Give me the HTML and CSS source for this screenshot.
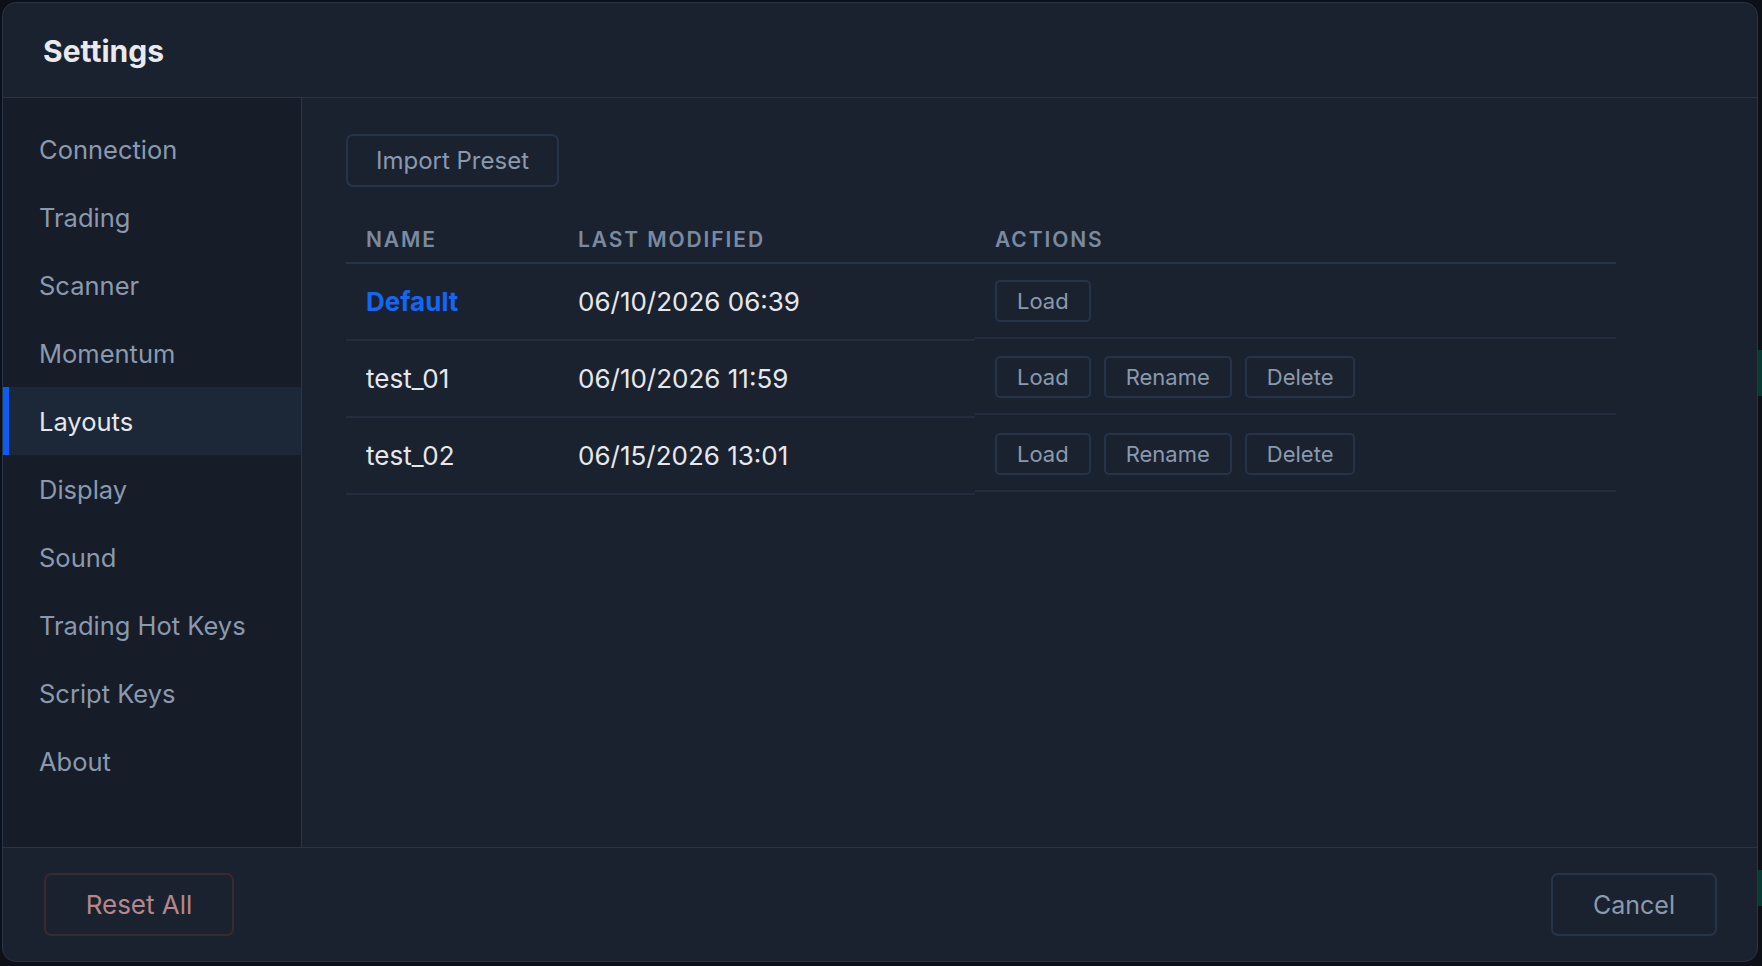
FILE: index.html
```html
<!DOCTYPE html>
<html lang="en">
<head>
  <meta charset="UTF-8" />
  <title>Settings</title>
  <link rel="stylesheet" href="styles.css">
</head>
<body>
  <div class="backdrop-strip strip-top"></div>
  <div class="backdrop-strip strip-bottom"></div>

  <div class="dialog">
    <div class="dialog-header">
      <h1>Settings</h1>
    </div>

    <div class="dialog-body">
      <ul class="sidebar">
        <li>Connection</li>
        <li>Trading</li>
        <li>Scanner</li>
        <li>Momentum</li>
        <li class="active">Layouts</li>
        <li>Display</li>
        <li>Sound</li>
        <li>Trading Hot Keys</li>
        <li>Script Keys</li>
        <li>About</li>
      </ul>

      <div class="panel">
        <button class="btn btn-import">Import Preset</button>

        <table class="layouts">
          <thead>
            <tr>
              <th class="col-name">Name</th>
              <th class="col-date">Last Modified</th>
              <th class="col-actions">Actions</th>
            </tr>
          </thead>
          <tbody>
            <tr>
              <td class="name current">Default</td>
              <td class="date">06/10/2026 06:39</td>
              <td class="actions">
                <button class="btn btn-small">Load</button>
              </td>
            </tr>
            <tr>
              <td class="name">test_01</td>
              <td class="date">06/10/2026 11:59</td>
              <td class="actions">
                <button class="btn btn-small">Load</button>
                <button class="btn btn-small">Rename</button>
                <button class="btn btn-small">Delete</button>
              </td>
            </tr>
            <tr>
              <td class="name">test_02</td>
              <td class="date">06/15/2026 13:01</td>
              <td class="actions">
                <button class="btn btn-small">Load</button>
                <button class="btn btn-small">Rename</button>
                <button class="btn btn-small">Delete</button>
              </td>
            </tr>
          </tbody>
        </table>
      </div>
    </div>

    <div class="dialog-footer">
      <button class="btn btn-reset">Reset All</button>
      <button class="btn btn-cancel">Cancel</button>
    </div>
  </div>
</body>
</html>
```

FILE: styles.css
```css
body {
  margin: 0;
  background: #0d1117;
  font-family: Inter, 'Noto Sans', sans-serif;
  height: 966px;
  overflow: hidden;
  position: relative;
}
/* bits of the app behind the dialog */
.backdrop-strip {
  position: absolute;
  right: 0;
  width: 5px;
  background: #0a3a34;
}
.strip-top {
  top: 350px;
  height: 46px;
}
.strip-bottom {
  top: 870px;
  height: 36px;
}
.dialog {
  position: relative;
  margin: 2px 0 0 2px;
  width: 1756px;
  height: 960px;
  box-sizing: border-box;
  background: #1a2230;
  border: 1px solid #27354a;
  border-radius: 14px;
  display: flex;
  flex-direction: column;
  overflow: hidden;
}
.dialog-header {
  height: 94px;
  flex-shrink: 0;
  display: flex;
  align-items: center;
  padding-left: 40px;
  border-bottom: 1px solid #27354a;
}
.dialog-header h1 {
  margin: 2px 0 0 0;
  font-size: 30px;
  font-weight: 700;
  color: #e8eaee;
}
.dialog-body {
  flex: 1;
  display: flex;
  min-height: 0;
}
.sidebar {
  list-style: none;
  margin: 0;
  padding: 17px 0 0 0;
  width: 298px;
  flex-shrink: 0;
  background: #161d29;
  border-right: 1px solid #27354a;
}
.sidebar li {
  height: 68px;
  display: flex;
  align-items: center;
  padding-left: 30px;
  font-size: 25.5px;
  color: #8b99ae;
  border-left: 6px solid transparent;
  box-sizing: border-box;
}
.sidebar li.active {
  background: #1c2837;
  border-left-color: #0b5cf5;
  color: #e4e7ec;
}
.panel {
  flex: 1;
  padding: 36px 0 0 44px;
}
.btn {
  font-family: inherit;
  background: transparent;
  border: 2px solid #26344a;
  color: #8b99ae;
  cursor: pointer;
}
.btn-import {
  width: 213px;
  height: 53px;
  border-radius: 7px;
  font-size: 24px;
}
.layouts {
  border-collapse: collapse;
  table-layout: fixed;
  margin-top: 21px;
  width: 1270px;
}
.layouts th {
  height: 55px;
  text-align: left;
  padding: 8px 0 0 20px;
  font-size: 21px;
  font-weight: 600;
  letter-spacing: 1.9px;
  text-transform: uppercase;
  color: #7b8aa1;
  border-bottom: 2px solid #26344a;
  box-sizing: border-box;
}
.col-name {
  width: 212px;
}
.col-date {
  width: 417px;
}
.layouts td {
  height: 75px;
  padding: 0 0 0 20px;
  font-size: 26px;
  color: #e6e8ec;
  border-bottom: 2px solid #222e40;
}
.layouts td.current {
  color: #1466f5;
  font-weight: 700;
}
.actions {
  display: flex;
  align-items: center;
  gap: 13px;
  box-sizing: border-box;
}
.btn-small {
  height: 42px;
  padding: 0 20px;
  border-radius: 5px;
  font-size: 22px;
}
.dialog-footer {
  height: 114px;
  flex-shrink: 0;
  box-sizing: border-box;
  border-top: 1px solid #27354a;
  display: flex;
  align-items: center;
  justify-content: space-between;
  padding: 0 40px 0 41px;
}
.btn-reset {
  width: 190px;
  height: 63px;
  border-radius: 7px;
  border-color: #3a292e;
  color: #b5878a;
  font-size: 26px;
}
.btn-cancel {
  width: 166px;
  height: 63px;
  border-radius: 7px;
  font-size: 25px;
}
```
